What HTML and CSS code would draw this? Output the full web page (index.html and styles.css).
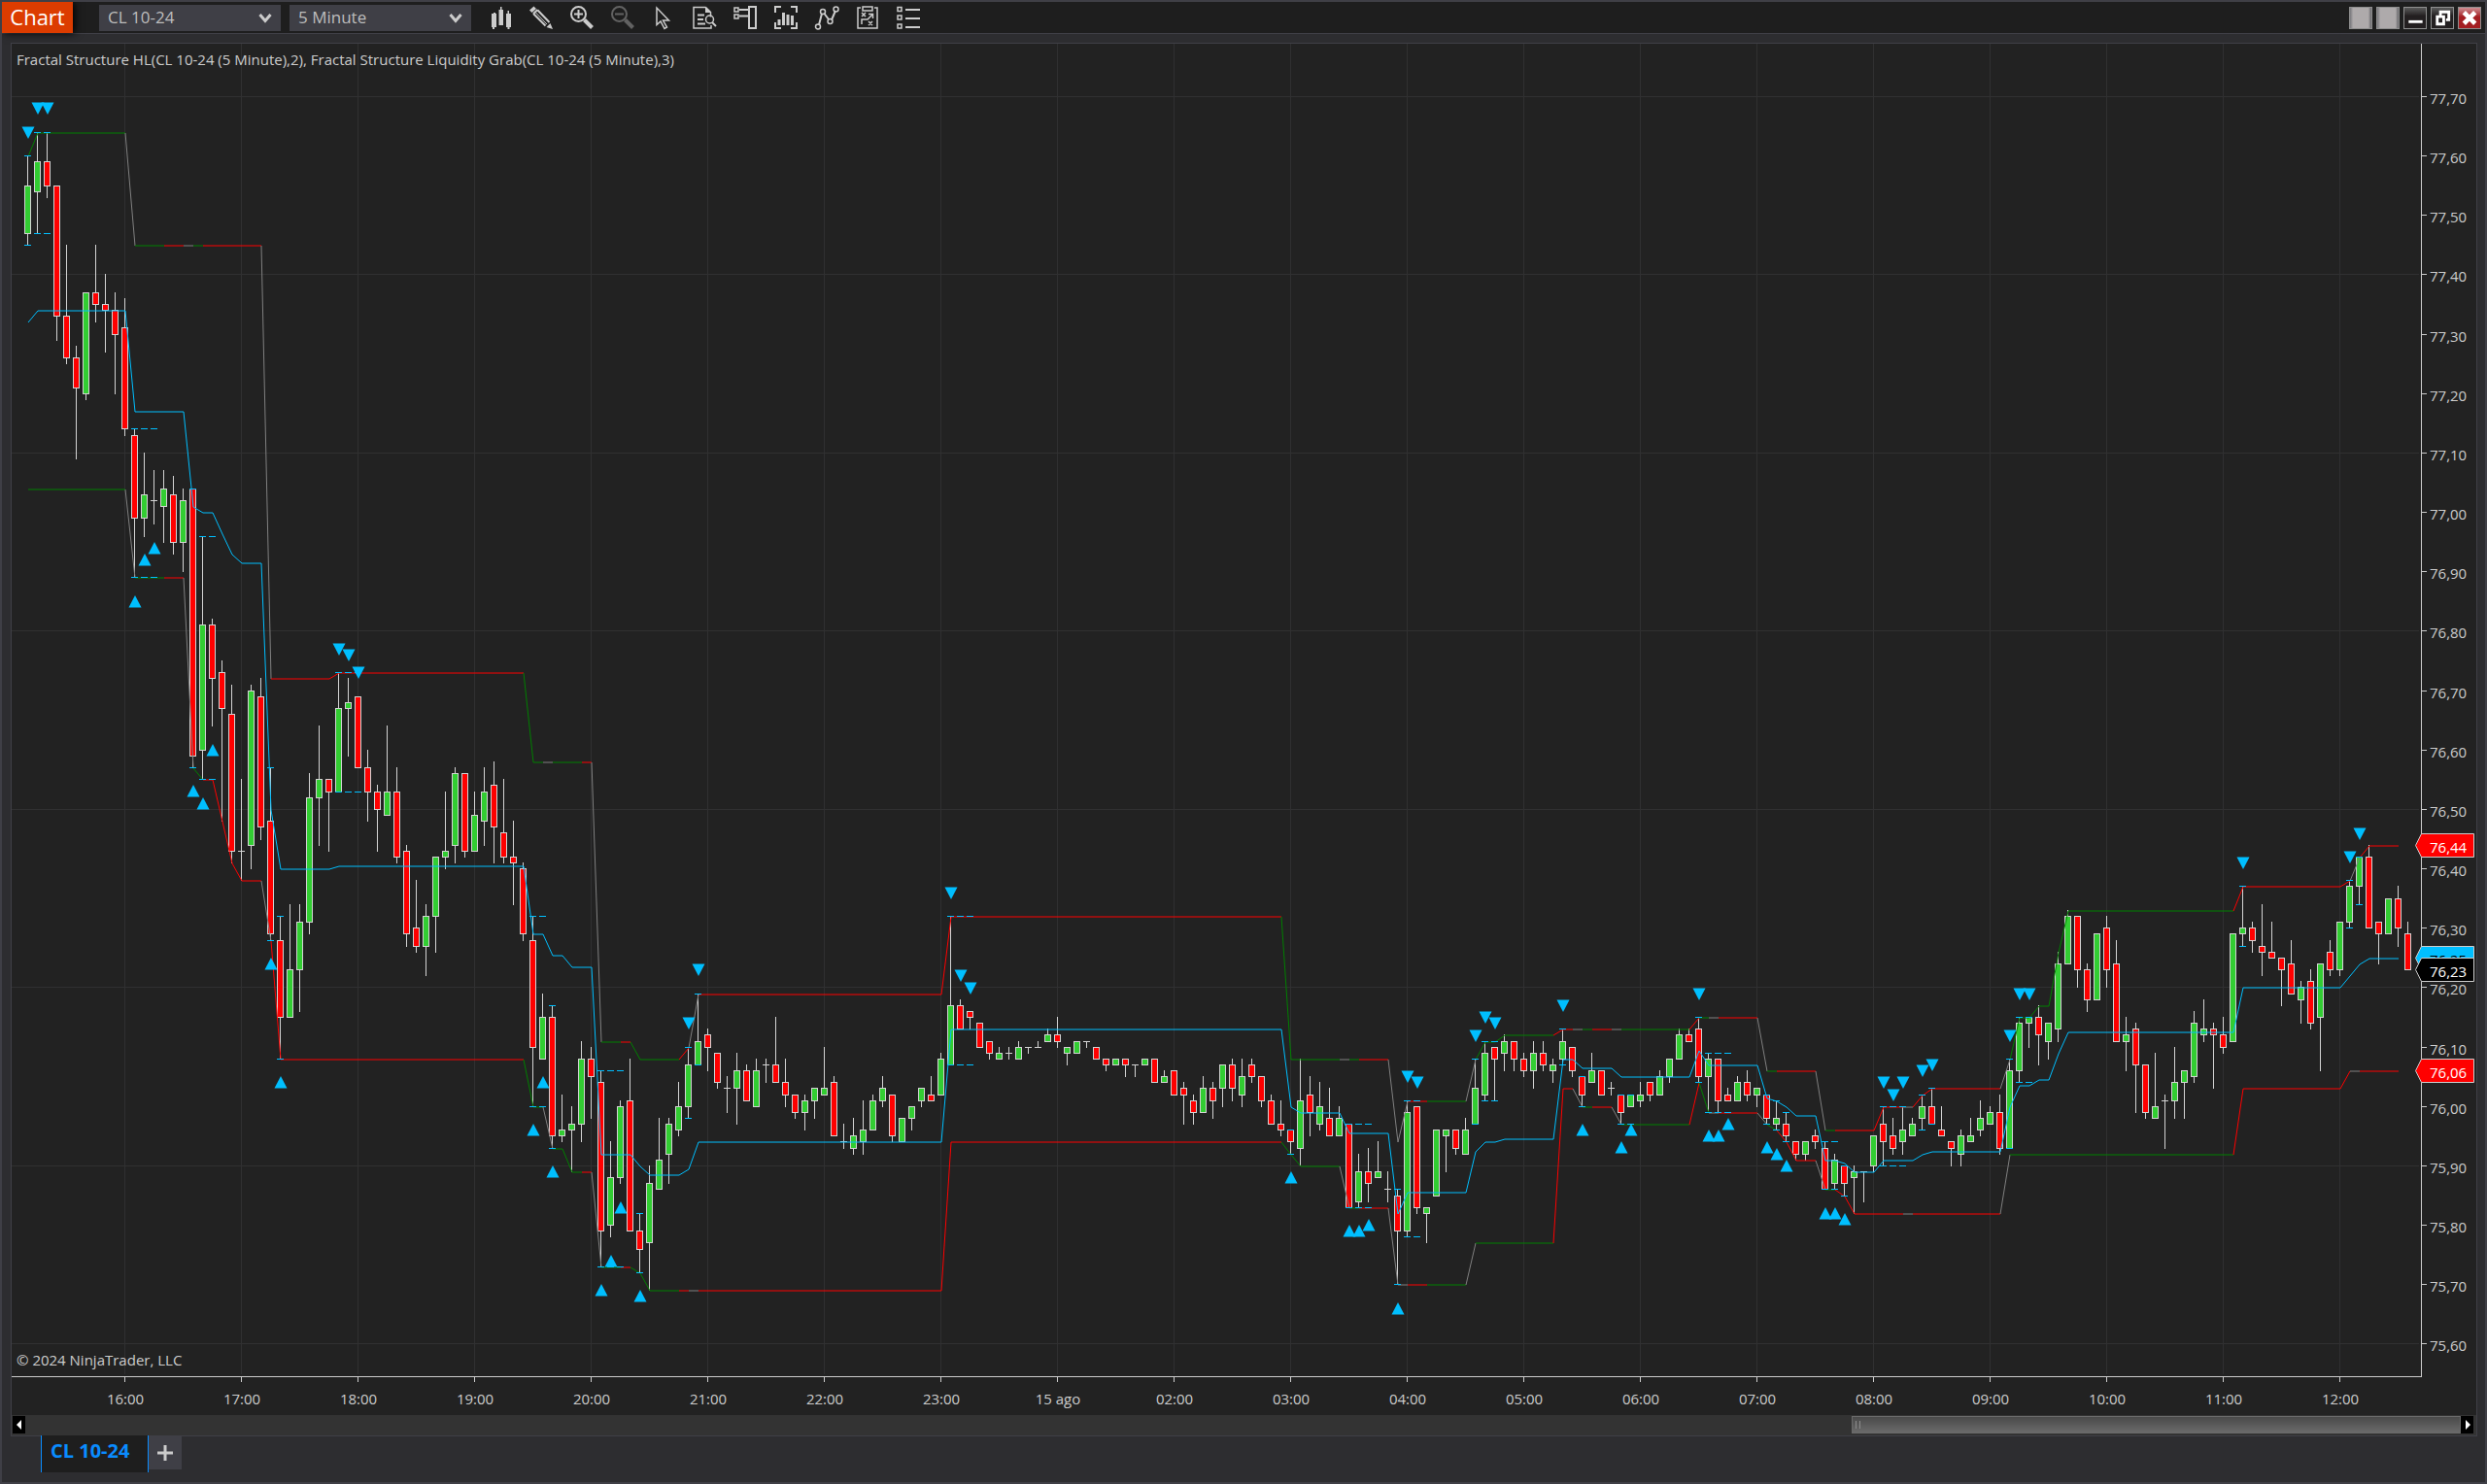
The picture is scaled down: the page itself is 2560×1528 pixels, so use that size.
FILE: index.html
```html
<!DOCTYPE html>
<html lang="en">
<head>
<meta charset="utf-8">
<title>Chart - CL 10-24</title>
<link rel="stylesheet" href="styles.css">
</head>
<body>
<div class="window">
  <header class="toolbar">
    <h1 class="brand">Chart</h1>
    <div class="pickers">
      <div class="picker">
        <select aria-label="Instrument"><option>CL 10-24</option></select>
        <svg class="chevron" viewBox="0 0 14 12"><path d="M1.5 2l5.500 6.500L12.500 2"/></svg>
      </div>
      <div class="picker">
        <select aria-label="Interval"><option>5 Minute</option></select>
        <svg class="chevron" viewBox="0 0 14 12"><path d="M1.5 2l5.500 6.500L12.500 2"/></svg>
      </div>
    </div>
    <nav class="tools" aria-label="Chart tools">
      <button aria-label="Chart style"><svg viewBox="0 0 24 24"><path class="solid" d="M3 8h2V7h2v1h1v14H6v2H4v-2H3zM10.500 4h1.500V1h1.500v3H15v16h-4.500zM18 8h1.500V5H21v3h2v14h-1.500v2H19.500v-2H18z"/></svg></button>
      <button aria-label="Drawing tools"><svg viewBox="0 0 24 24"><path class="solid" d="M0 4.500L4.500 0.500L7 3L2.500 7zM24 24l-2.500-6l-4 4z"/><path d="M4 8l12.500 12.500M8.500 4.500l12 12.500" /><path class="thin" d="M6.500 7l11.500 12"/><path d="M4 8l4.500-4"/></svg></button>
      <button aria-label="Zoom in"><svg viewBox="0 0 24 24"><circle cx="8.500" cy="8.500" r="7.500"/><path d="M8.500 4v9M4 8.500h9"/><path class="thick" d="M14.500 14.500l8 8"/></svg></button>
      <button class="off" aria-label="Zoom out" disabled><svg viewBox="0 0 24 24"><circle cx="8.500" cy="8.500" r="7.500"/><path d="M4 8.500h9"/><path class="thick" d="M14.500 14.500l8 8"/></svg></button>
      <button aria-label="Cursor"><svg viewBox="0 0 24 24"><path class="mid" d="M5 2v17.500l4-3.500l4 7.500l2.500-1.500l-4-7h6z"/></svg></button>
      <button aria-label="Data box"><svg viewBox="0 0 24 24"><path class="mid" d="M13.500 1.500H1v21.500h18v-3M13.500 1.500l5 5v5"/><path class="solid" d="M13 1l6 6h-6z"/><path d="M5 9.500h7M5 14h6M5 18.500h8"/><circle class="mid" cx="17.500" cy="14" r="4"/><path d="M20 17l4 4"/></svg></button>
      <button aria-label="Chart trader"><svg viewBox="0 0 24 24"><path class="mid" d="M1 2h4v4H1zM1 9h4v4H1z"/><path d="M6 4h10M6 10.500h10M16 1h7v22h-7z"/></svg></button>
      <button aria-label="Data series"><svg viewBox="0 0 24 24"><path d="M1 7V1h6M17 1h6v6M1 17v6h6M17 23h6v-6"/><path class="solid" d="M3.500 14h3v6h-3zM8 7h3v13H8zM12.500 9h3v11h-3zM17 10h3v10h-3z"/></svg></button>
      <button aria-label="Indicators"><svg viewBox="0 0 24 24"><path d="M4 19.500L7 8M9.500 8l4.500 6M17 14.500l4-9.500"/><circle class="mid" cx="3" cy="21.500" r="2.500"/><circle class="mid" cx="8" cy="6" r="2.500"/><circle class="mid" cx="15.500" cy="16" r="2.500"/><circle class="mid" cx="21.500" cy="3.500" r="2.500"/></svg></button>
      <button aria-label="Strategies"><svg viewBox="0 0 24 24"><path class="mid" d="M5 2H2v21h20V2h-3M7 1h10v4H7z"/><path class="mid" d="M6 19v-5h6l5-5M13 8.500h4.500V13M6 7l4 4M10 7l-4 4M13 16l4 4M17 16l-4 4"/></svg></button>
      <button aria-label="Properties"><svg viewBox="0 0 24 24"><path class="mid" d="M1 1.500h4v4H1zM1 10h4v4H1zM1 19h4v4H1z"/><path d="M9 4h15M9 13h15M9 22h15"/></svg></button>
    </nav>
    <div class="controls">
      <button class="plain" aria-label="Instrument link"></button>
      <button class="plain" aria-label="Interval link"></button>
      <button aria-label="Minimize"><svg viewBox="0 0 22 22"><path d="M4 15h15" /></svg></button>
      <button aria-label="Restore"><svg viewBox="0 0 22 22"><path d="M9 8V4.500h9v8.500h-3M5.500 9.500h7v8h-7z"/></svg></button>
      <button class="close" aria-label="Close"><svg viewBox="0 0 22 22"><path class="cross" d="M5 5l12 12M17 5L5 17"/></svg></button>
    </div>
  </header>
  <main class="workspace">
    <section class="panel">
      <div class="chart"><svg id="chart" role="img" aria-label="CL 10-24 five minute candlestick chart"></svg></div>
      <div class="scroll">
        <button class="step" aria-label="Scroll left"><svg viewBox="0 0 8 10"><path d="M6 0v10L1 5z"/></svg></button>
        <div class="track"><div class="thumb"><span class="grip"></span></div></div>
        <button class="step" aria-label="Scroll right"><svg viewBox="0 0 8 10"><path d="M2 0v10L7 5z"/></svg></button>
      </div>
    </section>
    <nav class="tabs">
      <button class="tab">CL 10-24</button>
      <button class="add" aria-label="Add tab"><svg viewBox="0 0 16 16"><path d="M8 0v16M0 8h16"/></svg></button>
    </nav>
  </main>
</div>
<script src="chart.js"></script>
</body>
</html>
```
FILE: styles.css
```css
* { box-sizing: border-box; }
body {
  margin: 0;
  background: #2d2d30;
  color: #cccccc;
  font-family: "Open Sans", "Noto Sans", sans-serif;
  font-size: 15px;
}
button, select { font: inherit; color: inherit; border: 0; padding: 0; margin: 0; }
svg { display: block; }

.window {
  display: flex;
  flex-direction: column;
  height: 100vh;
  min-height: 480px;
  border: 2px solid #3f3f46;
  overflow: hidden;
}

/* top bar */
.toolbar {
  display: flex;
  align-items: center;
  flex: none;
  height: 33px;
  background: #1e1e1e;
  border-bottom: 1px solid #3f3f46;
}
.brand {
  margin: 0;
  width: 73px;
  height: 32px;
  background: #dc3c00;
  color: #ffffff;
  font-size: 22px;
  font-weight: 400;
  line-height: 30px;
  text-align: center;
  box-shadow: 2px 0 8px #000000;
}
.pickers { display: flex; gap: 9px; margin-left: 27px; }
.picker { position: relative; width: 187px; height: 27px; }
.picker select {
  appearance: none;
  width: 100%;
  height: 100%;
  padding: 0 30px 2px 9px;
  background: #3f3f46;
  color: #bdbdbd;
  font-size: 17px;
  border-radius: 0;
}
.chevron {
  position: absolute;
  right: 9px;
  top: 8px;
  width: 14px;
  height: 12px;
  fill: none;
  stroke: #cccccc;
  stroke-width: 3;
  pointer-events: none;
}
.tools { display: flex; gap: 18px; margin-left: 18px; }
.tools button { width: 24px; height: 24px; background: none; }
.tools svg {
  width: 24px;
  height: 24px;
  fill: none;
  stroke: #cccccc;
  stroke-width: 2;
  overflow: visible;
}
.tools .off svg { stroke: #626262; }
.tools .solid { fill: #cccccc; stroke: none; }
.tools .thin { stroke-width: 1; }
.tools .mid { stroke-width: 1.5; }
.tools .thick { stroke-width: 4; }

.controls { display: flex; gap: 4px; margin-left: auto; margin-right: 4px; }
.controls button {
  width: 24px;
  height: 23px;
  border: 1px solid #8e8e8e;
  background: linear-gradient(#5a5a5a, #231f20 40%);
}
.controls .plain { background: linear-gradient(90deg, #77777b, #aeaaab 15%, #aeaaab 85%, #66666a); }
.controls .close { background: linear-gradient(#cf8e92, #a41e22 45%); }
.controls svg { width: 22px; height: 21px; fill: none; stroke: #ffffff; stroke-width: 3; }
.controls .cross { stroke-width: 5; }

/* chart panel */
.workspace {
  display: flex;
  flex-direction: column;
  flex: 1;
  min-height: 0;
  padding: 9px 8px 10px 9px;
}
.panel {
  display: flex;
  flex-direction: column;
  flex: 1;
  min-height: 0;
  background: #222222;
  border: 1px solid #3f3f46;
}
.chart { flex: 1; min-height: 0; }
.chart svg { width: 100%; height: 100%; }
.chart text { fill: #cccccc; font-size: 15px; }
.chart .centered { text-anchor: middle; }
.chart .on-tag { fill: #ffffff; }
.chart .on-cyan { fill: #000000; }
.grid { fill: #303031; }
.axis { fill: #cccccc; }
.up-body { fill: #32cd32; stroke: #d3d3d3; }
.down-body { fill: #ff0000; stroke: #d3d3d3; }
.wick { fill: #d3d3d3; }
.pivot { fill: #00bfff; }
.line { fill: none; }
.line-g { stroke: #008000; }
.line-r { stroke: #ff0000; }
.line-x { stroke: #808080; }
.line-mid { stroke: #00bfff; }
.tag { stroke: #cccccc; }
.tag-red { fill: #ff0000; }
.tag-cyan { fill: #00bfff; }
.tag-black { fill: #000000; }

.scroll {
  display: flex;
  flex: none;
  height: 21px;
  padding: 1px 3px 2px 1px;
  background: #333333;
}
.step { width: 13px; height: 18px; background: #000000; }
.step svg { width: 8px; height: 10px; margin: 0 auto; fill: #ffffff; }
.track { flex: 1; display: flex; justify-content: flex-end; }
.thumb {
  width: 25%;
  height: 18px;
  padding: 4px 3px;
  border: 1px solid #6a6a6a;
  background: linear-gradient(#4a4a4a, #6a6a6a);
}
.grip {
  display: block;
  width: 5px;
  height: 8px;
  border: solid #8a8a8a;
  border-width: 0 1px;
}

/* tabs */
.tabs { display: flex; flex: none; height: 38px; margin: -1px 0 0 31px; }
.tab {
  width: 111px;
  height: 38px;
  padding: 0 0 7px 9px;
  background: #1e1e1e;
  border: solid #0a8cff;
  border-width: 0 1px;
  color: #0a8cff;
  font-size: 20px;
  font-weight: 700;
  text-align: left;
}
.add { width: 34px; height: 35px; background: #3f3f46; }
.add svg { width: 16px; height: 16px; margin: 0 auto; stroke: #cccccc; stroke-width: 3; }
```
FILE: chart.js
```js
// Five minute bars as open, high, low, close, in cents above 75,00.
const BARS = `
247,260,245,255 254,264,247,259 259,264,253,255 255,255,229,233 233,245,225,226 226,228,209,221
220,237,219,237 237,245,232,235 235,240,227,234 234,237,220,230 231,236,213,214 213,214,189,199
199,210,196,203 202,207,198,202 201,207,195,204 203,206,193,195 195,204,190,202 204,204,157,159
160,196,155,181 181,182,164,172 173,175,148,167 166,171,141,143 143,155,138,143 144,171,140,170
169,172,145,147 148,157,128,129 128,132,108,115 115,134,115,123 123,134,116,131 131,156,129,152
152,164,144,155 155,155,143,153 153,173,153,167 167,172,159,168 169,169,157,157 157,160,148,153
153,154,143,150 149,164,149,153 153,157,141,142 143,144,127,129 130,138,126,127 127,134,122,132
132,142,126,142 142,153,140,143 144,157,141,156 156,156,142,143 143,153,143,149 148,157,144,153
154,158,141,147 146,155,141,142 142,148,134,141 140,141,128,129 128,132,100,110 108,119,108,115
115,117,93,95 95,102,94,96 96,100,89,97 97,111,94,108 108,110,98,105 104,106,73,79
80,94,78,88 88,101,87,100 101,108,79,79 79,82,72,76 77,90,69,87 86,98,86,91
92,98,87,97 96,104,95,100 100,110,98,107 107,119,107,111 112,113,106,110 109,109,103,104
103,105,99,103 103,109,97,106 106,107,101,101 100,108,100,106 107,108,104,107 107,115,104,104
104,108,100,102 102,102,98,99 99,102,96,101 101,103,98,103 102,110,102,103 104,105,95,95
94,97,93,94 93,98,92,95 94,101,92,96 96,102,96,101 101,105,100,103 102,102,94,95
94,98,94,98 98,100,96,100 101,103,100,103 102,105,101,101 102,109,102,108 107,132,107,117
117,118,113,113 116,116,113,115 114,114,110,110 111,111,108,109 108,110,108,109 109,110,108,109
108,111,108,110 110,110,109,110 110,111,110,110 111,113,111,112 112,115,110,111 109,110,107,110
109,111,109,111 111,111,110,111 110,110,108,108 108,108,106,107 107,108,107,108 108,108,105,107
107,107,105,107 107,108,107,108 108,108,104,104 104,106,104,105 106,106,102,102 103,104,97,102
101,102,97,99 99,105,99,103 103,104,98,101 103,107,100,107 107,108,101,103 102,108,100,105
107,108,104,105 105,105,100,101 101,102,97,97 97,101,95,96 96,96,92,94 93,108,90,101
102,105,95,99 97,104,96,100 98,103,95,95 95,100,95,98 97,97,83,83 84,92,83,89
89,93,84,87 88,94,88,89 86,89,84,86 85,86,70,79 79,101,78,99 100,100,82,83
82,83,77,83 85,96,85,96 95,96,89,96 96,96,92,93 92,98,92,96 97,108,97,103
102,111,101,109 110,110,101,108 109,112,106,111 111,111,106,108 108,109,105,106 106,111,103,109
109,111,106,107 106,108,104,107 108,113,107,111 110,110,105,106 105,105,100,102 104,109,104,106
106,106,102,102 103,104,102,103 102,102,97,99 100,102,100,102 101,104,100,102 104,104,101,102
102,106,102,105 105,108,104,108 108,113,108,112 112,113,111,111 113,115,104,105 105,109,99,108
108,108,99,101 102,103,101,101 101,105,101,104 104,106,101,102 102,103,100,103 102,102,97,98
97,101,96,98 97,99,94,95 94,94,91,92 92,94,91,94 95,96,93,94 93,94,86,86
87,92,86,91 90,90,85,87 88,90,82,89 89,89,84,89 90,95,89,95 97,100,90,94
95,98,92,93 94,100,92,96 95,98,95,97 98,102,96,100 100,103,97,97 96,100,95,95
94,94,90,93 92,96,90,95 94,98,94,95 96,101,95,98 97,100,97,99 99,102,92,93
93,108,93,106 106,115,104,114 114,115,110,115 115,117,107,112 111,114,108,114 113,126,111,124
124,133,124,132 132,132,120,123 123,124,116,118 118,129,118,129 130,132,120,123 124,128,111,111
111,115,106,112 113,114,99,107 107,107,98,99 98,109,98,100 101,102,93,101 101,110,98,104
104,106,98,106 105,116,104,114 112,118,111,113 113,114,103,112 112,115,109,110 111,129,111,129
129,137,127,130 130,131,126,128 127,134,122,126 126,131,125,125 125,125,117,123 124,128,119,119
118,121,114,120 121,123,113,114 115,124,106,124 126,128,122,123 123,131,122,131 131,138,130,137
137,142,134,142 142,144,130,130 131,131,124,129 129,135,129,135 135,137,127,130 129,131,123,123
`.trim().split(/\s+/).map(bar => bar.split(",").map(Number));

// Structure lines: "bar:level" points; the letter is the colour of the stretch that ends there.
const UPPER = `0:260 1:264g 10:264g 11:245x 14:245g 16:245r 17:245x 18:245g 24:245r 25:172x 31:172r 32:173r
51:173r 52:158g 53:158g 54:158x 57:158g 58:158r 59:111x 61:111g 62:111r 63:108g 67:108g 68:110r 69:119x
94:119r 95:132r 129:132r 130:108g 135:108g 136:108x 137:108g 140:108r 141:94x 142:101x 144:101r 148:101g
149:108x 150:111g 151:111g 152:112g 157:112g 158:113r 159:113r 160:113x 161:113g 163:113r 164:113x
171:113g 172:115r 173:115g 174:115x 178:115r 179:106x 180:106g 184:106r 185:96x 186:96g 190:96r 191:100r
193:100r 194:100x 195:102r 196:103r 203:103r 204:108x 205:115g 206:115g 207:117g 208:117g 209:126g
210:133g 227:133g 228:137r 238:137r 239:138r 240:142x 241:144r 244:144r`;
const LOWER = `0:204 10:204g 11:189x 14:189g 16:189r 17:157x 18:155g 19:155r 20:148r 21:141r 22:138r 24:138r
25:128x 26:108r 51:108r 52:100g 53:100g 54:93x 55:93g 56:89g 57:89g 58:89r 59:73x 61:73g 62:73r 63:72g
64:69g 67:69g 68:69r 69:69x 94:69r 95:94r 129:94r 130:92g 131:90g 135:90g 136:83x 137:83g 140:83r 141:70x
142:70x 144:70r 148:70g 149:77x 157:77g 158:103r 159:103r 160:100x 161:100g 163:100r 164:97x 171:97g
172:104r 173:99g 174:99x 178:99r 179:97x 180:96g 181:94r 182:91r 184:91r 185:86x 186:86g 187:85r 188:82r
193:82r 194:82x 203:82r 204:92x 227:92g 228:103r 238:103r 239:106r 240:106x 244:106r`;

// Liquidity grabs: first bar, number of bars, high, low.
const GRABS = [
  [0,1,260,245],[1,2,264,247],[11,3,214,189],[17,1,204,157],[18,2,196,155],[25,1,157,128],[26,1,132,108],
  [32,3,173,153],[52,2,132,100],[54,1,117,93],[59,3,106,73],[63,1,82,72],[68,1,110,98],[69,1,119,107],
  [95,3,132,107],[130,1,96,92],[136,3,97,83],[141,1,86,70],[142,2,101,78],[149,1,108,97],[150,2,111,101],
  [158,1,113,107],[160,1,105,100],[164,2,102,97],[172,1,115,104],[173,3,109,99],[179,1,102,97],
  [180,1,101,96],[181,1,99,94],[185,2,94,86],[187,1,90,85],[191,3,100,90],[195,1,102,96],[196,1,103,97],
  [204,1,108,93],[205,2,115,104],[228,1,137,127],[239,1,138,130],[240,1,142,134]
];
const SELLS = [0,1,2,32,33,34,68,69,95,96,97,142,143,149,150,151,158,172,191,192,193,195,196,204,205,206,228,239,240];
const BUYS = [11,12,13,17,18,19,25,26,52,53,54,59,60,61,63,130,136,137,138,141,160,164,165,173,174,175,179,180,181,185,186,187];
const HOURS = ["16:00","17:00","18:00","19:00","20:00","21:00","22:00","23:00","15 ago","02:00","03:00",
  "04:00","05:00","06:00","07:00","08:00","09:00","10:00","11:00","12:00"];
const TAGS = [[144, "red"], [125, "cyan"], [123, "black"], [106, "red"]];

const AXIS_WIDTH = 57, AXIS_HEIGHT = 40, PITCH = 10, TOP = 278.9, RANGE = 224.3;

function parseLine(source) {
  return source.split(/\s+/).map(item => {
    const [, bar, level, tone] = item.match(/(\d+):(\d+)(\w?)/);
    return { bar: +bar, level: +level, tone };
  });
}
function levelAt(points, bar) {
  const next = points.findIndex(p => p.bar >= bar);
  const b = points[next];
  if (b.bar === bar) return b.level;
  const a = points[next - 1];
  return a.level + (b.level - a.level) * (bar - a.bar) / (b.bar - a.bar);
}
const price = cents => ((7500 + cents) / 100).toFixed(2).replace(".", ",");

function draw() {
  const svg = document.getElementById("chart");
  const { width, height } = svg.parentNode.getBoundingClientRect();
  const right = Math.round(width) - AXIS_WIDTH;
  const bottom = Math.round(height) - AXIS_HEIGHT;
  const x = bar => right - 14 - (BARS.length - 1 - bar) * PITCH;
  const y = cents => Math.floor((TOP - cents) * bottom / RANGE);
  const out = [];
  const rect = (cls, left, top, w, h) => out.push(`<rect class="${cls}" x="${left}" y="${top}" width="${w}" height="${h}"/>`);
  const text = (cls, left, base, value) => out.push(`<text class="${cls}" x="${left}" y="${base}">${value}</text>`);

  for (let c = 270; c >= 60; c -= 30) rect("grid", 0, y(c), right - 2, 1);
  HOURS.forEach((hour, n) => rect("grid", x(10 + 12 * n), 0, 1, bottom - 2));

  text("", 5, 22, "Fractal Structure HL(CL 10-24 (5 Minute),2), Fractal Structure Liquidity Grab(CL 10-24 (5 Minute),3)");
  text("", 5, bottom - 11, "© 2024 NinjaTrader, LLC");

  BARS.forEach(([open, high, low, close], i) => {
    const top = y(Math.max(open, close)), end = y(Math.min(open, close));
    rect("wick", x(i), y(high), 1, y(low) - y(high) + 1);
    if (open === close) rect("wick", x(i) - 3, top, 7, 1);
    else out.push(`<rect class="${close > open ? "up" : "down"}-body" x="${x(i) - 2.5}" y="${top + 0.5}" width="6" height="${end - top}"/>`);
  });

  const upper = parseLine(UPPER), lower = parseLine(LOWER);
  for (const points of [upper, lower]) {
    for (let n = 1; n < points.length; n++) {
      const a = points[n - 1], b = points[n];
      out.push(`<path class="line line-${b.tone}" d="M${x(a.bar) + 1} ${y(a.level) + 1}L${x(b.bar) + 1} ${y(b.level) + 1}"/>`);
    }
  }
  const stops = [...new Set([...upper, ...lower].map(p => p.bar))].sort((a, b) => a - b);
  const middle = stops.map(bar => `${x(bar) + 1} ${y((levelAt(upper, bar) + levelAt(lower, bar)) / 2) + 1}`);
  out.push(`<path class="line line-mid" d="M${middle.join("L")}"/>`);

  for (const [first, count, high, low] of GRABS) {
    for (let i = first; i < first + count; i++) {
      rect("pivot", x(i) - 3, y(high), 7, 1);
      rect("pivot", x(i) - 3, y(low), 7, 1);
    }
  }
  for (const i of SELLS) out.push(`<path class="pivot" d="M${x(i) + 1} ${y(BARS[i][1] + 3) + 1}l-6.500-12.500h13z"/>`);
  for (const i of BUYS) out.push(`<path class="pivot" d="M${x(i) + 1} ${y(BARS[i][2] - 3)}l-6.500 12.500h13z"/>`);

  rect("axis", right, 0, 1, bottom);
  rect("axis", 0, bottom, right + 1, 1);
  for (let c = 270; c >= 60; c -= 10) {
    rect("axis", right, y(c), 6, 1);
    text("", right + 9, y(c) + 8, price(c));
  }
  HOURS.forEach((hour, n) => {
    rect("axis", x(10 + 12 * n), bottom, 1, 6);
    text("centered", x(10 + 12 * n) + 1, bottom + 29, hour);
  });
  for (const [cents, tone] of TAGS) {
    const mid = y(cents) + 0.5;
    out.push(`<path class="tag tag-${tone}" d="M${right - 5.5} ${mid}l6-12h54v24h-54z"/>`);
    text(tone === "cyan" ? "on-cyan" : "on-tag", right + 9, y(cents) + 8, price(cents));
  }
  svg.innerHTML = out.join("");
}
draw();
window.addEventListener("resize", draw);
```
